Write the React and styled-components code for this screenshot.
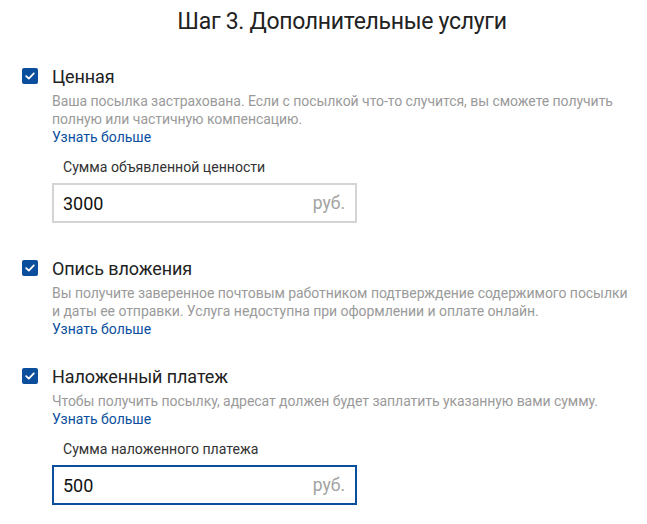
import styled, { createGlobalStyle } from 'styled-components';

const GlobalStyle = createGlobalStyle`
  body {
    margin: 0;
    background: #fff;
    font-family: Roboto, "Liberation Sans", Arial, sans-serif;
  }
`;

const Page = styled.div`
  width: 647px;
  padding: 8px 8px 0 22px;
  box-sizing: border-box;
`;

const Title = styled.h2`
  margin: 0 0 30px;
  text-align: center;
  font-size: 23px;
  font-weight: 400;
  color: #222;
  line-height: 28px;
  padding-left: 23px;
  letter-spacing: -0.3px;
`;

const Service = styled.section`
  margin-bottom: ${(p) => p.$gap || 0}px;
`;

const Header = styled.label`
  display: flex;
  align-items: center;
  gap: 14px;
  height: 20px;
`;

const Box = styled.span`
  width: 16px;
  height: 16px;
  border-radius: 2px;
  background: #0b4f9c;
  display: flex;
  align-items: center;
  justify-content: center;
  flex-shrink: 0;
`;

const Name = styled.span`
  font-size: 18px;
  color: #222;
  letter-spacing: -0.1px;
`;

const Body = styled.div`
  padding-left: 30px;
  padding-top: 6px;
`;

const Description = styled.p`
  margin: 0;
  max-width: 584px;
  font-size: 14px;
  line-height: 18px;
  color: #9a9a9a;
  letter-spacing: -0.05px;
`;

const More = styled.a`
  display: block;
  font-size: 14px;
  line-height: 18px;
  color: #0a4f9e;
  text-decoration: none;
`;

const Field = styled.div`
  margin-top: 12px;
`;

const FieldLabel = styled.div`
  font-size: 14.1px;
  line-height: 18px;
  color: #333;
  padding-left: 11px;
  margin-bottom: 7px;
`;

const InputBox = styled.div`
  width: 305px;
  height: 40px;
  box-sizing: border-box;
  border: 2px solid ${(p) => (p.$focused ? '#0b4f9c' : '#d4d4d4')};
  display: flex;
  align-items: center;
  justify-content: space-between;
  padding: 0 10px 0 9px;
`;

const Value = styled.span`
  font-size: 18px;
  color: #111;
`;

const Unit = styled.span`
  font-size: 17.5px;
  color: #a3a3a3;
`;

const Check = () => (
  <Box>
    <svg width="10" height="8" viewBox="0 0 10 8" fill="none">
      <path d="M1.2 4.2 3.8 6.6 8.8 1.4" stroke="#fff" strokeWidth="1.8" strokeLinecap="round" strokeLinejoin="round" />
    </svg>
  </Box>
);

const Amount = ({ label, value, focused }) => (
  <Field>
    <FieldLabel>{label}</FieldLabel>
    <InputBox $focused={focused}>
      <Value>{value}</Value>
      <Unit>руб.</Unit>
    </InputBox>
  </Field>
);

export default function App() {
  return (
    <Page>
      <GlobalStyle />
      <Title>Шаг 3. Дополнительные услуги</Title>

      <Service $gap={35}>
        <Header>
          <Check />
          <Name>Ценная</Name>
        </Header>
        <Body>
          <Description>
            Ваша посылка застрахована. Если с посылкой что-то случится, вы сможете получить
            полную или частичную компенсацию.
          </Description>
          <More href="#">Узнать больше</More>
          <Amount label="Сумма объявленной ценности" value="3000" />
        </Body>
      </Service>

      <Service $gap={28}>
        <Header>
          <Check />
          <Name>Опись вложения</Name>
        </Header>
        <Body>
          <Description>
            Вы получите заверенное почтовым работником подтверждение содержимого посылки
            и даты ее отправки. Услуга недоступна при оформлении и оплате онлайн.
          </Description>
          <More href="#">Узнать больше</More>
        </Body>
      </Service>

      <Service>
        <Header>
          <Check />
          <Name>Наложенный платеж</Name>
        </Header>
        <Body>
          <Description>
            Чтобы получить посылку, адресат должен будет заплатить указанную вами сумму.
          </Description>
          <More href="#">Узнать больше</More>
          <Amount label="Сумма наложенного платежа" value="500" focused />
        </Body>
      </Service>
    </Page>
  );
}
